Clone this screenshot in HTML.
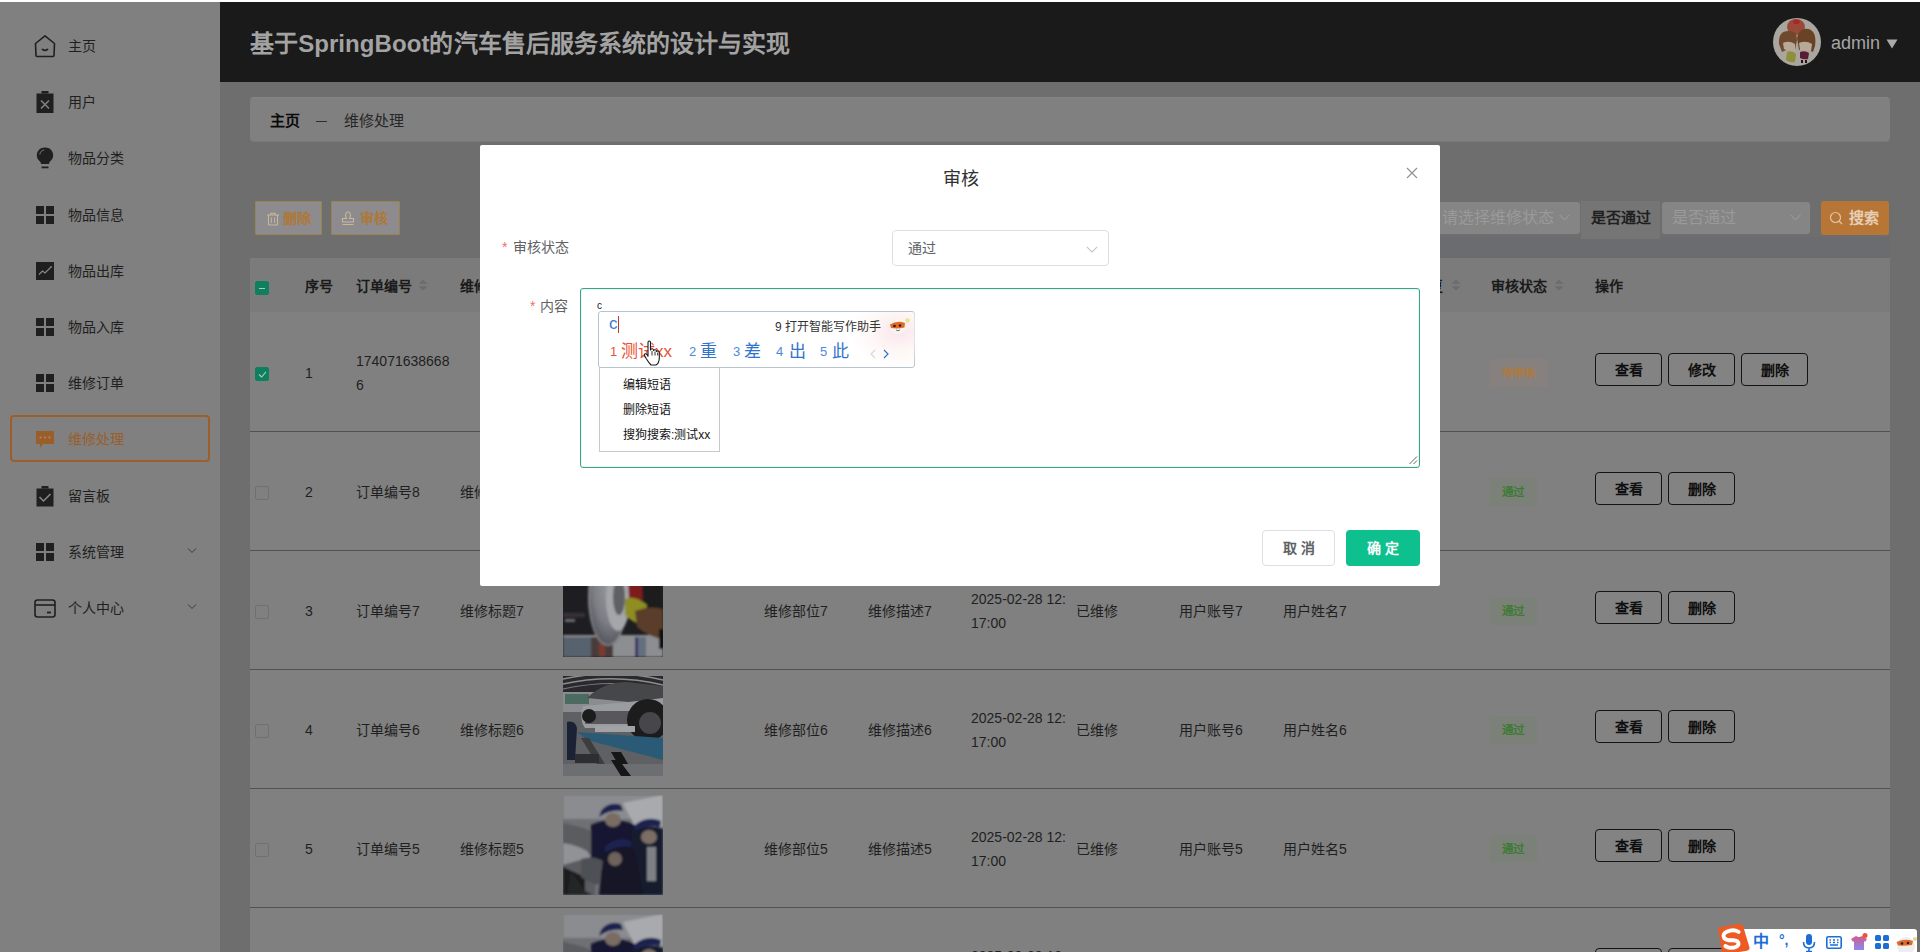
<!DOCTYPE html>
<html lang="zh-CN">
<head>
<meta charset="utf-8">
<style>
*{box-sizing:border-box;margin:0;padding:0}
html,body{width:1920px;height:952px;overflow:hidden}
body{position:relative;background:#6e6e6e;font-family:"Liberation Sans",sans-serif;color:#1f1f1f;font-size:14px}
.a{position:absolute;white-space:nowrap}
.topline{position:absolute;left:0;top:0;width:1920px;height:2px;background:#fff}
.side{position:absolute;left:0;top:2px;width:220px;height:950px;background:#808080}
.mi{position:absolute;left:0;width:220px;height:46px}
.mi svg{position:absolute}
.mi .tx{position:absolute;left:68px;top:0;line-height:46px;font-size:14px;color:#1f1f1f;white-space:nowrap}
.mi.act .tx{color:#9a5e2a}
.chev{position:absolute;left:187px;top:18px}
.actbox{position:absolute;left:10px;top:415px;width:200px;height:47px;border:2px solid #9c5f2c;border-radius:4px}
.header{position:absolute;left:220px;top:2px;width:1700px;height:80px;background:#1a1a1a}
.title{position:absolute;left:30px;top:1px;letter-spacing:0.07px;line-height:82px;font-size:24px;font-weight:bold;color:#a3a3a3;white-space:nowrap}
.bread{position:absolute;left:250px;top:97px;width:1640px;height:45px;background:#808080;border-radius:4px;border-top:1px solid #858585;border-bottom:1px solid #787878}
.panel{display:none}
.btn1{position:absolute;top:201px;height:34px;border:1px solid #98844e;background:#8d8b8e;border-radius:1px;color:#ad7838;font-weight:bold;font-size:14px}
.sel{position:absolute;top:202px;height:32px;background:#858585;border-radius:3px}
.table{position:absolute;left:250px;top:258px;width:1640px;height:700px;background:#808080}
.thead{position:absolute;left:0;top:0;width:1640px;height:54px;background:#7b7b7b}
.th{position:absolute;top:1px;line-height:54px;font-weight:bold;color:#1a1a1a;font-size:14px;white-space:nowrap}
.row{position:absolute;left:0;width:1640px;height:119px}
.img{position:absolute;width:100px;height:100px;background:#333;overflow:hidden}
.td{position:absolute;font-size:14px;color:#1f1f1f;white-space:nowrap}
.cb{position:absolute;left:5px;width:14px;height:14px;border:1px solid #707070;border-radius:2px;background:#808080}
.cb.on{background:#0f7f5f;border-color:#0f7f5f}
.obtn{position:absolute;height:33px;width:67px;border:1.6px solid #141414;border-radius:4px;background:#838383;font-weight:bold;font-size:14px;text-align:center;line-height:32px;color:#0f0f0f}
.tag{position:absolute;height:28px;font-size:12px;line-height:28px;padding:0 13px;border-radius:2px}
.tag.w{background:#86817f;color:#ad7a3e;font-weight:bold;font-size:11.5px}
.tag.g{background:#7b8178;color:#3f7a36;font-weight:bold;font-size:11.5px}
.sort{position:absolute;width:8px;height:12px}
.modal{position:absolute;left:480px;top:145px;width:960px;height:441px;background:#fff;border-radius:2px}
.ime{position:absolute;left:598px;top:311px;width:317px;height:57px;background:#fff;border:1px solid #b7c3cf;border-radius:3px;z-index:30;white-space:nowrap}
.ctx{position:absolute;left:599px;top:367px;width:121px;height:85px;background:#fff;border:1px solid #c9c9c9;z-index:29}
.sogou{position:absolute;left:1734px;top:929px;width:183px;height:26px;background:#fff;border-radius:3px;z-index:30}
</style>
</head>
<body>
<div class="topline"></div>

<!-- SIDEBAR -->
<div class="side"></div>
<div class="actbox"></div>
<div id="menu">
<div class="mi" style="top:23px"><div style="position:absolute;left:0;top:23px"><svg style="left:33px;top:-12px" width="24" height="24" viewBox="0 0 24 24"><path d="M2.5 9.5 L12 1.8 L21.5 9.5 L21 21.5 Q21 22.5 20 22.5 L4 22.5 Q3 22.5 3 21.5 Z" fill="none" stroke="#1f1f1f" stroke-width="1.6" stroke-linejoin="round"/><path d="M9.5 15.3 Q12 17.3 14.5 15.3" fill="none" stroke="#1f1f1f" stroke-width="1.7" stroke-linecap="round"/></svg></div><div class="tx">主页</div></div>
<div class="mi" style="top:79px"><div style="position:absolute;left:0;top:23px"><svg style="left:36px;top:-11px" width="18" height="22" viewBox="0 0 18 22"><rect x="5.5" y="0" width="7" height="2.5" fill="#1f1f1f"/><rect x="0.5" y="2.5" width="17" height="19.5" fill="#1f1f1f"/><path d="M5 9.5 L13 17.5 M13 9.5 L5 17.5" stroke="#808080" stroke-width="1.6"/></svg></div><div class="tx">用户</div></div>
<div class="mi" style="top:135px"><div style="position:absolute;left:0;top:23px"><svg style="left:36px;top:-11px" width="18" height="22" viewBox="0 0 18 22"><path d="M9 0.5 C4 0.5 0.8 4 0.8 8.3 C0.8 11.5 2.8 13.5 4.5 15 L5 17 L13 17 L13.5 15 C15.2 13.5 17.2 11.5 17.2 8.3 C17.2 4 14 0.5 9 0.5 Z" fill="#1f1f1f"/><path d="M3.8 7.5 C4 5 5.8 3.2 8.2 3" fill="none" stroke="#7a7a7a" stroke-width="1"/><rect x="5.5" y="19.5" width="7" height="1.8" fill="#1f1f1f"/></svg></div><div class="tx">物品分类</div></div>
<div class="mi" style="top:192px"><div style="position:absolute;left:0;top:23px"><svg style="left:36px;top:-9px" width="18" height="18" viewBox="0 0 18 18"><rect x="0" y="0" width="8" height="8" fill="#1f1f1f"/><rect x="10" y="0" width="8" height="8" fill="#1f1f1f"/><rect x="0" y="10" width="8" height="8" fill="#1f1f1f"/><rect x="10" y="10" width="8" height="8" fill="#1f1f1f"/></svg></div><div class="tx">物品信息</div></div>
<div class="mi" style="top:248px"><div style="position:absolute;left:0;top:23px"><svg style="left:36px;top:-9px" width="18" height="18" viewBox="0 0 18 18"><rect x="0" y="0" width="18" height="18" fill="#1f1f1f"/><path d="M3 12.5 L6.5 9 L9 11 L14.5 5.5" fill="none" stroke="#8a8a8a" stroke-width="1.2"/><circle cx="15" cy="5" r="0.9" fill="#8a8a8a"/></svg></div><div class="tx">物品出库</div></div>
<div class="mi" style="top:304px"><div style="position:absolute;left:0;top:23px"><svg style="left:36px;top:-9px" width="18" height="18" viewBox="0 0 18 18"><rect x="0" y="0" width="8" height="8" fill="#1f1f1f"/><rect x="10" y="0" width="8" height="8" fill="#1f1f1f"/><rect x="0" y="10" width="8" height="8" fill="#1f1f1f"/><rect x="10" y="10" width="8" height="8" fill="#1f1f1f"/></svg></div><div class="tx">物品入库</div></div>
<div class="mi" style="top:360px"><div style="position:absolute;left:0;top:23px"><svg style="left:36px;top:-9px" width="18" height="18" viewBox="0 0 18 18"><rect x="0" y="0" width="8" height="8" fill="#1f1f1f"/><rect x="10" y="0" width="8" height="8" fill="#1f1f1f"/><rect x="0" y="10" width="8" height="8" fill="#1f1f1f"/><rect x="10" y="10" width="8" height="8" fill="#1f1f1f"/></svg></div><div class="tx">维修订单</div></div>
<div class="mi act" style="top:416px"><div style="position:absolute;left:0;top:23px"><svg style="left:36px;top:-8px" width="18" height="18" viewBox="0 0 18 18"><path d="M0 0 H18 V13 H7 L4 17 V13 H0 Z" fill="#9a5e2a"/><circle cx="4.5" cy="6.5" r="1.1" fill="#b08868"/><circle cx="9" cy="6.5" r="1.1" fill="#b08868"/><circle cx="13.5" cy="6.5" r="1.1" fill="#b08868"/></svg></div><div class="tx">维修处理</div></div>
<div class="mi" style="top:473px"><div style="position:absolute;left:0;top:23px"><svg style="left:36px;top:-10px" width="18" height="21" viewBox="0 0 18 21"><rect x="5.5" y="0" width="7" height="2.5" fill="#1f1f1f"/><rect x="0.5" y="2.5" width="17" height="18" fill="#1f1f1f"/><path d="M3.5 11 L7.5 15 L14.5 8" fill="none" stroke="#8a8a8a" stroke-width="1.5"/></svg></div><div class="tx">留言板</div></div>
<div class="mi" style="top:529px"><div style="position:absolute;left:0;top:23px"><svg style="left:36px;top:-9px" width="18" height="18" viewBox="0 0 18 18"><rect x="0" y="0" width="8" height="8" fill="#1f1f1f"/><rect x="10" y="0" width="8" height="8" fill="#1f1f1f"/><rect x="0" y="10" width="8" height="8" fill="#1f1f1f"/><rect x="10" y="10" width="8" height="8" fill="#1f1f1f"/></svg></div><div class="tx">系统管理</div><svg class="chev" width="10" height="7" viewBox="0 0 10 7"><path d="M1 1.5 L5 5.5 L9 1.5" fill="none" stroke="#3a3a3a" stroke-width="1"/></svg></div>
<div class="mi" style="top:585px"><div style="position:absolute;left:0;top:23px"><svg style="left:34px;top:-9px" width="22" height="19" viewBox="0 0 22 19"><rect x="1" y="1" width="20" height="17" rx="2.5" fill="none" stroke="#1f1f1f" stroke-width="1.6"/><path d="M1 6 H21" stroke="#1f1f1f" stroke-width="1.6"/><path d="M13 13.5 H17" stroke="#1f1f1f" stroke-width="1.8"/></svg></div><div class="tx">个人中心</div><svg class="chev" width="10" height="7" viewBox="0 0 10 7"><path d="M1 1.5 L5 5.5 L9 1.5" fill="none" stroke="#3a3a3a" stroke-width="1"/></svg></div>
</div>

<!-- HEADER -->
<div class="header">
  <div class="title">基于SpringBoot的汽车售后服务系统的设计与实现</div>

  <div class="a" style="left:1553px;top:16px;width:48px;height:48px;border-radius:50%;background:#a9a69f;overflow:hidden">
    <svg width="48" height="48" viewBox="0 0 48 48"><defs><filter id="avb"><feGaussianBlur stdDeviation="0.7"/></filter></defs><g filter="url(#avb)">
      <ellipse cx="23" cy="9" rx="9" ry="8" fill="#9a4a38"/>
      <path d="M20 3 Q23 0 27 3 L26 6 L21 6 Z" fill="#a8262a"/>
      <path d="M6 26 Q5 12 17 13 Q24 13 24 22 L22 32 Q15 30 9 34 Z" fill="#6e4a2e"/>
      <path d="M24 20 Q26 9 36 11 Q44 14 42 28 L40 34 Q33 30 26 32 Z" fill="#6b4328"/>
      <path d="M10 25 Q16 22 22 26 L22 33 Q15 33 11 31 Z" fill="#b8a898"/>
      <path d="M26 25 Q33 22 39 26 L38 33 Q32 33 27 32 Z" fill="#b8a898"/>
      <path d="M14 34 Q19 32 23 36 L22 44 Q17 45 13 42 Z" fill="#8e8e3a"/>
      <path d="M27 34 Q32 32 36 35 L35 41 Q31 42 27 40 Z" fill="#5a1a30"/>
      <rect x="28" y="42" width="2" height="3" fill="#2a0a1a"/><rect x="32" y="42" width="2" height="3" fill="#2a0a1a"/>
    </g></svg>
  </div>
  <div class="a" style="left:1611px;top:0;line-height:82px;font-size:18px;color:#a6a6a6">admin</div>
  <svg class="a" style="left:1666px;top:37px" width="12" height="10" viewBox="0 0 12 10"><path d="M0.5 0.5 H11.5 L6 9.5 Z" fill="#aaa"/></svg>
</div>

<div class="bread">
  <div class="a" style="left:20px;top:0;line-height:45px;font-size:15px;font-weight:bold;color:#0a0a0a">主页</div>
  <div class="a" style="left:66px;top:23px;width:11px;height:1px;background:#2e2e2e"></div>
  <div class="a" style="left:94px;top:0;line-height:45px;font-size:15px;color:#262626">维修处理</div>
</div>


<div class="a" style="left:1440px;top:237px;width:450px;height:21px;background:#6a6c70"></div>
<div class="a" style="left:1581px;top:201px;width:79px;height:38px;background:#757575"></div>
<div class="btn1" style="left:255px;width:67px">
  <svg class="a" style="left:10px;top:10px" width="14" height="14" viewBox="0 0 14 14"><path d="M1 3 H13 M4.5 3 V1.3 H9.5 V3 M2.5 3 V13 H11.5 V3 M5.3 5.5 V11 M8.7 5.5 V11" fill="none" stroke="#c9b79a" stroke-width="1"/></svg>
  <div class="a" style="left:27px;top:0;line-height:32px">删除</div>
</div>
<div class="btn1" style="left:331px;width:69px">
  <svg class="a" style="left:9px;top:9px" width="14" height="15" viewBox="0 0 14 15"><path d="M4.5 5 Q4.5 1 7 1 Q9.5 1 9.5 5 L8.5 7.5 H12.5 V11 H1.5 V7.5 H5.5 Z M1.5 13.5 H12.5" fill="none" stroke="#c9b79a" stroke-width="1.1"/></svg>
  <div class="a" style="left:28px;top:0;line-height:32px">审核</div>
</div>
<div class="sel" style="left:1400px;width:180px">
  <div class="a" style="left:42px;top:0;line-height:31px;font-size:16px;color:#9a9a9a">请选择维修状态</div>
  <svg class="a" style="left:159px;top:12px" width="11" height="7" viewBox="0 0 11 7"><path d="M0.5 0.8 L5.5 5.8 L10.5 0.8" fill="none" stroke="#a0a0a0" stroke-width="1"/></svg>
</div>
<div class="a" style="left:1591px;top:202px;line-height:32px;font-size:15px;font-weight:bold;color:#1f1f1f">是否通过</div>
<div class="sel" style="left:1662px;width:148px">
  <div class="a" style="left:10px;top:0;line-height:31px;font-size:16px;color:#9a9a9a">是否通过</div>
  <svg class="a" style="left:128px;top:12px" width="11" height="7" viewBox="0 0 11 7"><path d="M0.5 0.8 L5.5 5.8 L10.5 0.8" fill="none" stroke="#a0a0a0" stroke-width="1"/></svg>
</div>
<div class="a" style="left:1821px;top:201px;width:68px;height:34px;background:#b77636;border-radius:3px">
  <svg class="a" style="left:8px;top:10px" width="14" height="14" viewBox="0 0 14 14"><circle cx="6.5" cy="6.5" r="5" fill="none" stroke="#e0c4a6" stroke-width="1.2"/><path d="M10 10 L13 13" stroke="#e0c4a6" stroke-width="1.2"/></svg>
  <div class="a" style="left:28px;top:0;line-height:34px;font-size:15px;font-weight:bold;color:#e6cdb3">搜索</div>
</div>
<div class="table">
<div class="thead">
<div class="cb on" style="top:23px"><div class="a" style="left:3px;top:5.5px;width:6px;height:1.2px;background:#9fcfc0"></div></div>
<div class="th" style="left:55px">序号</div>
<div class="th" style="left:106px">订单编号</div>
<div class="th" style="left:210px">维修标题</div>
<div class="th" style="left:1137px">审核回复</div>
<div class="th" style="left:1241px">审核状态</div>
<div class="th" style="left:1345px">操作</div>
<svg class="a" style="left:168px;top:21px" width="10" height="12" viewBox="0 0 10 12"><path d="M5 0.5 L9.5 4.8 H0.5 Z M5 11.5 L9.5 7.2 H0.5 Z" fill="#6c6c6c"/></svg>
<svg class="a" style="left:1201px;top:21px" width="10" height="12" viewBox="0 0 10 12"><path d="M5 0.5 L9.5 4.8 H0.5 Z M5 11.5 L9.5 7.2 H0.5 Z" fill="#6c6c6c"/></svg>
<svg class="a" style="left:1304px;top:21px" width="10" height="12" viewBox="0 0 10 12"><path d="M5 0.5 L9.5 4.8 H0.5 Z M5 11.5 L9.5 7.2 H0.5 Z" fill="#6c6c6c"/></svg>
</div>
<div class="row" style="top:54px">
<div class="cb on" style="top:55px"><svg class="a" style="left:2px;top:2px" width="9" height="9" viewBox="0 0 9 9"><path d="M1 4.5 L3.6 7 L8 1.8" fill="none" stroke="#9fcfc0" stroke-width="1.1"/></svg></div>
<div class="td" style="left:55px;top:49px;line-height:24px">1</div>
<div class="td" style="left:106px;top:37px;line-height:24px">174071638668<br>6</div>
<div class="tag w" style="left:1239px;top:47px">待审核</div>
<div class="obtn" style="left:1345px;top:41px">查看</div>
<div class="obtn" style="left:1418px;top:41px">修改</div>
<div class="obtn" style="left:1491px;top:41px">删除</div>
</div>
<div class="row" style="top:173px">
<div class="cb" style="top:55px"></div>
<div class="td" style="left:55px;top:49px;line-height:24px">2</div>
<div class="td" style="left:106px;top:49px;line-height:24px">订单编号8</div>
<div class="td" style="left:210px;top:49px;line-height:24px">维修标题8</div>
<div class="tag g" style="left:1239px;top:47px">通过</div>
<div class="obtn" style="left:1345px;top:41px">查看</div>
<div class="obtn" style="left:1418px;top:41px">删除</div>
</div>
<div class="row" style="top:292px">
<div class="cb" style="top:55px"></div>
<div class="td" style="left:55px;top:49px;line-height:24px">3</div>
<div class="td" style="left:106px;top:49px;line-height:24px">订单编号7</div>
<div class="td" style="left:210px;top:49px;line-height:24px">维修标题7</div>
<div class="img" style="left:313px;top:7px"><svg width="100" height="100" viewBox="0 0 100 100"><defs><filter id="bla"><feGaussianBlur stdDeviation="0.8"/></filter><radialGradient id="dg" cx="0.55" cy="0.35" r="0.7"><stop offset="0" stop-color="#9a9ba0"/><stop offset="0.6" stop-color="#7c7e84"/><stop offset="1" stop-color="#4a4c54"/></radialGradient></defs>
<rect width="100" height="100" fill="#1e1e22"/>
<g filter="url(#bla)">
<rect x="0" y="78" width="100" height="22" fill="#8c8e92"/>
<rect x="0" y="80" width="28" height="20" fill="#56646e"/>
<rect x="28" y="80" width="22" height="20" fill="#4a3a3a"/>
<rect x="36" y="86" width="6" height="14" fill="#7a3a2e"/>
<rect x="72" y="80" width="3" height="20" fill="#3a2e6a"/>
<rect x="75" y="80" width="8" height="20" fill="#64707c"/>
<rect x="0" y="56" width="22" height="4" fill="#3a3238"/>
<rect x="2" y="62" width="10" height="3" fill="#6a6a6c"/>
<ellipse cx="45" cy="40" rx="20" ry="49" fill="url(#dg)"/>
<ellipse cx="45" cy="40" rx="19" ry="48" fill="none" stroke="#b0b2b6" stroke-width="1.6" stroke-dasharray="1.2 1.8"/>
<ellipse cx="55" cy="42" rx="12" ry="32" fill="#a4a6aa"/>
<ellipse cx="56" cy="40" rx="6" ry="18" fill="#5e6066"/>
<path d="M64 0 H80 V43 H66 Z" fill="#7c1a1e"/>
<path d="M78 0 H100 V53 H80 Z" fill="#1c1c1e"/>
<path d="M62 42 Q72 38 84 48 L80 68 Q70 66 62 58 Z" fill="#8e8e22"/>
<path d="M72 54 Q86 48 100 52 V82 Q86 80 74 70 Z" fill="#5a3e2c"/>
<rect x="96" y="72" width="4" height="20" fill="#0c0c0c"/>
</g></svg></div>
<div class="td" style="left:514px;top:49px;line-height:24px">维修部位7</div>
<div class="td" style="left:618px;top:49px;line-height:24px">维修描述7</div>
<div class="td" style="left:721px;top:37px;line-height:24px">2025-02-28 12:<br>17:00</div>
<div class="td" style="left:826px;top:49px;line-height:24px">已维修</div>
<div class="td" style="left:929px;top:49px;line-height:24px">用户账号7</div>
<div class="td" style="left:1033px;top:49px;line-height:24px">用户姓名7</div>
<div class="tag g" style="left:1239px;top:47px">通过</div>
<div class="obtn" style="left:1345px;top:41px">查看</div>
<div class="obtn" style="left:1418px;top:41px">删除</div>
</div>
<div class="row" style="top:411px">
<div class="cb" style="top:55px"></div>
<div class="td" style="left:55px;top:49px;line-height:24px">4</div>
<div class="td" style="left:106px;top:49px;line-height:24px">订单编号6</div>
<div class="td" style="left:210px;top:49px;line-height:24px">维修标题6</div>
<div class="img" style="left:313px;top:7px"><svg width="100" height="100" viewBox="0 0 100 100"><defs><filter id="blb"><feGaussianBlur stdDeviation="0.7"/></filter></defs>
<rect width="100" height="100" fill="#5e6064"/>
<g filter="url(#blb)">
<rect x="0" y="0" width="100" height="16" fill="#2a2b2e"/>
<path d="M0 3 Q50 -8 100 4" stroke="#8c8c8e" stroke-width="1.4" fill="none"/>
<path d="M0 8 Q50 -3 100 9" stroke="#8c8c8e" stroke-width="1.4" fill="none"/>
<path d="M0 13 Q50 2 100 13" stroke="#7a7a7c" stroke-width="1.2" fill="none"/>
<rect x="0" y="16" width="100" height="20" fill="#8a8c90"/>
<rect x="2" y="18" width="24" height="10" fill="#4c6a60"/>
<path d="M24 22 Q40 6 64 6 L100 10 V24 L66 26 Z" fill="#44464a"/>
<path d="M20 30 L66 26 L100 22 V52 H22 Q16 44 20 30 Z" fill="#9a9ca0"/>
<rect x="22" y="35" width="48" height="13" fill="#58595c"/>
<circle cx="85" cy="44" r="21" fill="#1c1c1f"/>
<circle cx="87" cy="47" r="11" fill="#46464c"/>
<circle cx="26" cy="40" r="7" fill="#1a1a1c"/>
<rect x="32" y="50" width="40" height="6" fill="#a0a2a6"/>
<path d="M14 56 L100 62 V84 L24 64 Z" fill="#2c5a74"/>
<path d="M4 46 Q12 44 14 52 L12 84 H4 Z" fill="#1e2036"/>
<path d="M18 62 L40 98 H48 L26 62 Z" fill="#3c3c3e"/>
<path d="M48 76 L62 100 H72 L58 76 Z" fill="#141414"/>
<rect x="12" y="78" width="24" height="9" fill="#2e2e30"/>
<rect x="0" y="88" width="100" height="12" fill="#6c6e72"/>
<path d="M48 84 L58 100 H68 L56 84 Z" fill="#161616"/>
</g></svg></div>
<div class="td" style="left:514px;top:49px;line-height:24px">维修部位6</div>
<div class="td" style="left:618px;top:49px;line-height:24px">维修描述6</div>
<div class="td" style="left:721px;top:37px;line-height:24px">2025-02-28 12:<br>17:00</div>
<div class="td" style="left:826px;top:49px;line-height:24px">已维修</div>
<div class="td" style="left:929px;top:49px;line-height:24px">用户账号6</div>
<div class="td" style="left:1033px;top:49px;line-height:24px">用户姓名6</div>
<div class="tag g" style="left:1239px;top:47px">通过</div>
<div class="obtn" style="left:1345px;top:41px">查看</div>
<div class="obtn" style="left:1418px;top:41px">删除</div>
</div>
<div class="row" style="top:530px">
<div class="cb" style="top:55px"></div>
<div class="td" style="left:55px;top:49px;line-height:24px">5</div>
<div class="td" style="left:106px;top:49px;line-height:24px">订单编号5</div>
<div class="td" style="left:210px;top:49px;line-height:24px">维修标题5</div>
<div class="img" style="left:313px;top:7px"><svg width="100" height="100" viewBox="0 0 100 100"><defs><filter id="blc"><feGaussianBlur stdDeviation="0.8"/></filter></defs>
<rect width="100" height="100" fill="#6e7074"/>
<g filter="url(#blc)">
<rect x="0" y="0" width="100" height="24" fill="#8a8c90"/>
<path d="M60 8 L100 0 V32 L72 32 Z" fill="#a8aaae"/>
<path d="M0 28 Q20 32 32 38 V100 H0 Z" fill="#5a5c60"/>
<path d="M0 48 Q14 50 24 56 L28 62 L0 70 Z" fill="#909296"/>
<path d="M0 72 L22 82 V100 H0 Z" fill="#1a1b1e"/>
<path d="M28 30 Q50 20 72 30 L74 70 H28 Z" fill="#151830"/>
<ellipse cx="50" cy="25" rx="8" ry="7" fill="#7a6c64"/>
<path d="M38 16 Q46 6 58 10 L60 16 Q48 14 36 22 Z" fill="#1c2450"/>
<path d="M68 36 Q88 28 100 34 V100 H72 Z" fill="#161a2e"/>
<ellipse cx="86" cy="42" rx="8" ry="7" fill="#7c6e66"/>
<path d="M72 30 Q84 20 98 26 L97 32 Q84 30 70 36 Z" fill="#1c2450"/>
<rect x="84" y="52" width="9" height="34" fill="#7e8084"/>
<path d="M40 56 Q55 46 72 56 L80 100 H36 Z" fill="#121526"/>
<ellipse cx="52" cy="64" rx="7" ry="7" fill="#6e625c"/>
<path d="M42 52 Q54 40 68 46 L68 52 Q54 50 42 58 Z" fill="#1c2450"/>
<path d="M18 64 Q30 60 40 66 L36 90 Q26 88 18 82 Z" fill="#4e5156"/>
<path d="M8 76 L22 96 L30 100 H4 Z" fill="#242628"/>
</g></svg></div>
<div class="td" style="left:514px;top:49px;line-height:24px">维修部位5</div>
<div class="td" style="left:618px;top:49px;line-height:24px">维修描述5</div>
<div class="td" style="left:721px;top:37px;line-height:24px">2025-02-28 12:<br>17:00</div>
<div class="td" style="left:826px;top:49px;line-height:24px">已维修</div>
<div class="td" style="left:929px;top:49px;line-height:24px">用户账号5</div>
<div class="td" style="left:1033px;top:49px;line-height:24px">用户姓名5</div>
<div class="tag g" style="left:1239px;top:47px">通过</div>
<div class="obtn" style="left:1345px;top:41px">查看</div>
<div class="obtn" style="left:1418px;top:41px">删除</div>
</div>
<div class="row" style="top:649px">
<div class="cb" style="top:55px"></div>
<div class="td" style="left:55px;top:49px;line-height:24px">6</div>
<div class="td" style="left:106px;top:49px;line-height:24px">订单编号4</div>
<div class="td" style="left:210px;top:49px;line-height:24px">维修标题4</div>
<div class="img" style="left:313px;top:7px"><svg width="100" height="100" viewBox="0 0 100 100"><defs><filter id="blc"><feGaussianBlur stdDeviation="0.8"/></filter></defs>
<rect width="100" height="100" fill="#6e7074"/>
<g filter="url(#blc)">
<rect x="0" y="0" width="100" height="24" fill="#8a8c90"/>
<path d="M60 8 L100 0 V32 L72 32 Z" fill="#a8aaae"/>
<path d="M0 28 Q20 32 32 38 V100 H0 Z" fill="#5a5c60"/>
<path d="M0 48 Q14 50 24 56 L28 62 L0 70 Z" fill="#909296"/>
<path d="M0 72 L22 82 V100 H0 Z" fill="#1a1b1e"/>
<path d="M28 30 Q50 20 72 30 L74 70 H28 Z" fill="#151830"/>
<ellipse cx="50" cy="25" rx="8" ry="7" fill="#7a6c64"/>
<path d="M38 16 Q46 6 58 10 L60 16 Q48 14 36 22 Z" fill="#1c2450"/>
<path d="M68 36 Q88 28 100 34 V100 H72 Z" fill="#161a2e"/>
<ellipse cx="86" cy="42" rx="8" ry="7" fill="#7c6e66"/>
<path d="M72 30 Q84 20 98 26 L97 32 Q84 30 70 36 Z" fill="#1c2450"/>
<rect x="84" y="52" width="9" height="34" fill="#7e8084"/>
<path d="M40 56 Q55 46 72 56 L80 100 H36 Z" fill="#121526"/>
<ellipse cx="52" cy="64" rx="7" ry="7" fill="#6e625c"/>
<path d="M42 52 Q54 40 68 46 L68 52 Q54 50 42 58 Z" fill="#1c2450"/>
<path d="M18 64 Q30 60 40 66 L36 90 Q26 88 18 82 Z" fill="#4e5156"/>
<path d="M8 76 L22 96 L30 100 H4 Z" fill="#242628"/>
</g></svg></div>
<div class="td" style="left:514px;top:49px;line-height:24px">维修部位4</div>
<div class="td" style="left:618px;top:49px;line-height:24px">维修描述4</div>
<div class="td" style="left:721px;top:37px;line-height:24px">2025-02-28 12:<br>17:00</div>
<div class="td" style="left:826px;top:49px;line-height:24px">已维修</div>
<div class="td" style="left:929px;top:49px;line-height:24px">用户账号4</div>
<div class="td" style="left:1033px;top:49px;line-height:24px">用户姓名4</div>
<div class="tag g" style="left:1239px;top:47px">通过</div>
<div class="obtn" style="left:1345px;top:41px">查看</div>
<div class="obtn" style="left:1418px;top:41px">删除</div>
</div>
<div class="a" style="left:0;top:173px;width:1640px;height:1px;background:#525252"></div>
<div class="a" style="left:0;top:292px;width:1640px;height:1px;background:#525252"></div>
<div class="a" style="left:0;top:411px;width:1640px;height:1px;background:#525252"></div>
<div class="a" style="left:0;top:530px;width:1640px;height:1px;background:#525252"></div>
<div class="a" style="left:0;top:649px;width:1640px;height:1px;background:#525252"></div>
</div>

<div class="modal">
  <div class="a" style="left:463px;top:20px;line-height:28px;font-size:18px;color:#303133">审核</div>
  <svg class="a" style="left:926px;top:22px" width="12" height="12" viewBox="0 0 12 12"><path d="M1 1 L11 11 M11 1 L1 11" stroke="#909399" stroke-width="1.2"/></svg>
  <div class="a" style="left:22px;top:91px;line-height:22px;font-size:14px;color:#f56c6c">*</div>
  <div class="a" style="left:33px;top:91px;line-height:22px;font-size:14px;color:#606266">审核状态</div>
  <div class="a" style="left:412px;top:85px;width:217px;height:36px;border:1px solid #dcdfe6;border-radius:4px;background:#fff">
    <div class="a" style="left:15px;top:0;line-height:34px;font-size:14px;color:#606266">通过</div>
    <svg class="a" style="left:193px;top:15px" width="12" height="7" viewBox="0 0 12 7"><path d="M0.8 0.8 L6 6 L11.2 0.8" fill="none" stroke="#c0c4cc" stroke-width="1.1"/></svg>
  </div>
  <div class="a" style="left:50px;top:150px;line-height:22px;font-size:14px;color:#f56c6c">*</div>
  <div class="a" style="left:60px;top:150px;line-height:22px;font-size:14px;color:#606266">内容</div>
  <div class="a" style="left:100px;top:143px;width:840px;height:180px;border:1px solid #3aa586;border-radius:3px;background:#fff;box-shadow:inset 0 0 0 1px #e6fbf6">
    <svg class="a" style="left:827px;top:166px" width="10" height="10" viewBox="0 0 10 10"><path d="M9 1.5 L1.5 9 M9 5.5 L5.5 9" stroke="#555" stroke-width="0.9"/></svg>
  </div>
  <div class="a" style="left:117px;top:155px;line-height:12px;font-size:10px;color:#222">c</div>
  <div class="a" style="left:782px;top:385px;width:73px;height:36px;border:1px solid #dcdfe6;border-radius:4px;background:#fff;text-align:center;line-height:34px;font-size:14px;font-weight:bold;color:#606266;letter-spacing:4px;text-indent:4px">取消</div>
  <div class="a" style="left:866px;top:385px;width:74px;height:36px;border-radius:4px;background:#0dc08d;text-align:center;line-height:36px;font-size:14px;font-weight:bold;color:#fff;letter-spacing:4px;text-indent:4px">确定</div>
</div>
<div class="ime">
  <div class="a" style="left:250px;top:0;width:66px;height:56px;background:radial-gradient(ellipse at 75% 35%, rgba(250,225,235,0.9) 0%, rgba(252,240,236,0.6) 35%, rgba(255,255,255,0) 70%)"></div>
  <div class="a" style="left:10px;top:2px;line-height:20px;font-size:17px;color:#3a78d2">c</div>
  <div class="a" style="left:19px;top:4px;width:1px;height:17px;background:#c0392b"></div>
  <div class="a" style="left:176px;top:5px;line-height:20px;font-size:12px;color:#333">9 打开智能写作助手</div>
  
  <div class="a" style="left:289px;top:5px;width:22px;height:19px">
    <svg width="22" height="19" viewBox="0 0 22 19"><ellipse cx="10" cy="10" rx="8" ry="7.5" fill="#f7f3ee"/><path d="M2 7.5 Q9 3 17 6 L16.5 10.5 Q10 12 3 11 Z" fill="#e06a2a"/><circle cx="6.5" cy="9" r="1.3" fill="#2a1a10"/><circle cx="12" cy="8.5" r="1.3" fill="#2a1a10"/><path d="M8 13 Q10 14.5 12 13" stroke="#555" stroke-width="0.8" fill="none"/><circle cx="19.5" cy="3.5" r="2.2" fill="#e8e490"/></svg>
  </div>
  <div class="a" style="left:11px;top:29px;line-height:22px;font-size:13px;color:#e8502f">1</div>
  <div class="a" style="left:22px;top:29px;line-height:22px;font-size:17px;color:#e8502f">测试xx</div>
  <div class="a" style="left:90px;top:29px;line-height:22px;font-size:13px;color:#4a8ad8">2</div>
  <div class="a" style="left:101px;top:29px;line-height:22px;font-size:17px;color:#2f74cc">重</div>
  <div class="a" style="left:134px;top:29px;line-height:22px;font-size:13px;color:#4a8ad8">3</div>
  <div class="a" style="left:145px;top:29px;line-height:22px;font-size:17px;color:#2f74cc">差</div>
  <div class="a" style="left:177px;top:29px;line-height:22px;font-size:13px;color:#4a8ad8">4</div>
  <div class="a" style="left:190px;top:29px;line-height:22px;font-size:17px;color:#2f74cc">出</div>
  <div class="a" style="left:221px;top:29px;line-height:22px;font-size:13px;color:#4a8ad8">5</div>
  <div class="a" style="left:233px;top:29px;line-height:22px;font-size:17px;color:#2f74cc">此</div>
  <svg class="a" style="left:270px;top:37px" width="8" height="10" viewBox="0 0 8 10"><path d="M6 1 L2 5 L6 9" fill="none" stroke="#d8d8d8" stroke-width="1.2"/></svg>
  <svg class="a" style="left:283px;top:37px" width="8" height="10" viewBox="0 0 8 10"><path d="M2 1 L6 5 L2 9" fill="none" stroke="#2f74cc" stroke-width="1.2"/></svg>
</div>
<div class="ctx">
  <div class="a" style="left:23px;top:9px;line-height:16px;font-size:12px;color:#111">编辑短语</div>
  <div class="a" style="left:23px;top:34px;line-height:16px;font-size:12px;color:#111">删除短语</div>
  <div class="a" style="left:23px;top:59px;line-height:16px;font-size:12px;color:#111">搜狗搜索:测试xx</div>
</div>
<svg class="a" style="left:643px;top:340px;z-index:40" width="20" height="30" viewBox="0 0 20 30"><path d="M5 2.5 Q5 1 6.3 1 Q7.5 1 7.5 2.5 V10 Q8 8.5 9.3 8.8 Q10.5 9 10.5 10.5 Q11 9.5 12.3 9.8 Q13.5 10 13.5 11.5 Q14 10.8 15.2 11 Q16.3 11.3 16.3 12.8 V18 Q16.3 23 13 25 H8 Q6 23 3.5 19 L1.5 15.5 Q1 14.2 2.2 13.8 Q3.3 13.5 4.2 15 L5 16.2 Z" fill="#fff" stroke="#1a1a1a" stroke-width="1.1" stroke-linejoin="round"/><path d="M9 11 V15.5 M12 11.5 V15.5 M14.7 12.5 V15.5" stroke="#1a1a1a" stroke-width="0.9"/></svg>
<div class="sogou">
  <svg class="a" style="left:-19px;top:-5px;transform:rotate(-8deg)" width="34" height="30" viewBox="0 0 36 30"><path d="M5 4 Q4 1 7 1 L28 0 Q31 0 31.5 3 L35 26 Q35.5 29 32 29.5 L9 30 Q6 30 5.5 27 Z" fill="#ee5a24"/><path d="M26 8.5 Q21 4.5 14 6.5 Q8 8.5 10 13 Q12 16 19 16.5 Q25 17.5 24 21.5 Q22 25.5 13 23.5 L10 21.5" fill="none" stroke="#fff" stroke-width="4.2" stroke-linecap="round"/></svg>
  <div class="a" style="left:19px;top:3px;line-height:20px;font-size:16px;font-weight:bold;color:#1c6ed6">中</div>
  <div class="a" style="left:45px;top:1px;line-height:20px;font-size:14px;font-weight:bold;color:#1c6ed6">°,</div>
  <svg class="a" style="left:68px;top:5px" width="14" height="19" viewBox="0 0 14 19"><rect x="4" y="0" width="6" height="11" rx="3" fill="#1c6ed6"/><path d="M1.5 8 Q1.5 14 7 14 Q12.5 14 12.5 8 M7 14 V17 M4 17.5 H10" fill="none" stroke="#1c6ed6" stroke-width="1.6"/></svg>
  <svg class="a" style="left:92px;top:7px" width="16" height="13" viewBox="0 0 16 13"><rect x="0.8" y="0.8" width="14.4" height="11.4" rx="1.5" fill="none" stroke="#1c6ed6" stroke-width="1.6"/><path d="M3.5 4 H5 M7 4 H9 M11 4 H12.5 M3.5 6.5 H5 M7 6.5 H9 M11 6.5 H12.5 M4 9 H12" stroke="#1c6ed6" stroke-width="1.4"/></svg>
  <svg class="a" style="left:116px;top:3px" width="20" height="20" viewBox="0 0 20 20"><defs><linearGradient id="shg" x1="0" y1="0" x2="0" y2="1"><stop offset="0" stop-color="#d45a8a"/><stop offset="1" stop-color="#8a8af0"/></linearGradient></defs><path d="M1 7 L6 4 Q9 6 12 4 L17 7 L15 10 L14 9 V18 H4 V9 L3 10 Z" fill="url(#shg)"/><circle cx="15" cy="3.5" r="2.5" fill="#f0503a"/></svg>
  <svg class="a" style="left:141px;top:6px" width="14" height="14" viewBox="0 0 14 14"><rect x="0" y="0" width="6" height="6" rx="1.5" fill="#1c6ed6"/><rect x="8" y="0" width="6" height="6" rx="1.5" fill="#1c6ed6"/><rect x="0" y="8" width="6" height="6" rx="1.5" fill="#1c6ed6"/><rect x="8" y="8" width="6" height="6" rx="1.5" fill="#1c6ed6"/></svg>
  <svg class="a" style="left:161px;top:3px" width="22" height="23" viewBox="0 0 22 23"><ellipse cx="11" cy="14" rx="9" ry="9" fill="#eee"/><path d="M1.5 10 Q10 6 18 9 L17 13 Q10 14 3 13.5 Z" fill="#e0682a"/><circle cx="7" cy="11.5" r="1.3" fill="#222"/><circle cx="13" cy="11" r="1.3" fill="#222"/><circle cx="20" cy="7" r="2" fill="#d8e090"/></svg>
</div>

</body>
</html>
